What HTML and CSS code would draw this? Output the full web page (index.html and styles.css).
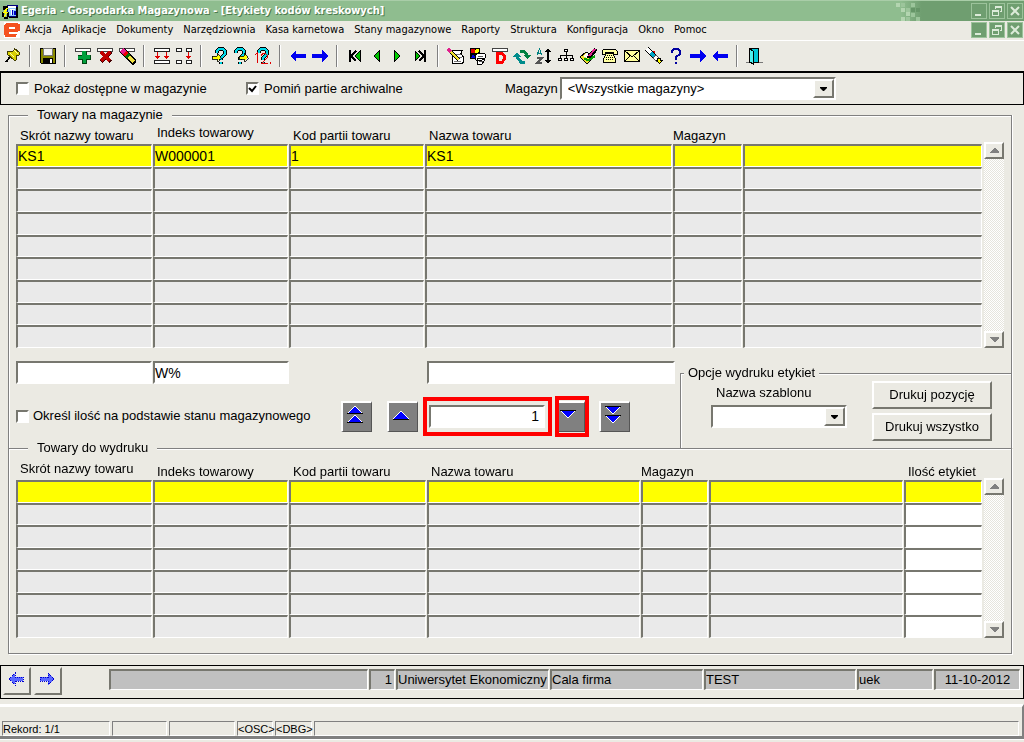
FILE: index.html
```
<!DOCTYPE html>
<html lang="pl">
<head>
<meta charset="utf-8">
<title>Egeria - Gospodarka Magazynowa</title>
<link rel="stylesheet" href="styles.css">
</head>
<body>
<header class="titlebar">
  <svg class="app-icon" viewBox="0 0 17 17" aria-hidden="true"><path fill="#000080" d="M5 2h10l1 1v11H5z"/><path fill="#8cc8ff" d="M6 4h8v9H6z"/><path fill="#fff" d="M5 3h9v2H5zM8 6h5v1h-2v5H9V7H8z"/><path fill="#0000c0" d="M10 7h1v5h-1zM12 8h2v4h-2z"/><path fill="#000" d="M1 3h5v4H1zM0 9h2v5H0zM5 9h2v5H5zM2 14h4v2H2zM14 4h2v11h-9v-1h7z"/><path fill="#ff0" d="M4 5h2L4 9h2l-4 6 1-5H1z"/></svg>
  <h1 class="title">Egeria - Gospodarka Magazynowa - [Etykiety kodów kreskowych]</h1>
  <svg class="mosaic" viewBox="0 0 28 21" aria-hidden="true"><path fill="#b3d5b0" d="M2 2h4v4H2zM7 7h4v4H7zM7 16h4v4H7zM12 11h4v4h-4z"/><path fill="#9cc59b" d="M7 2h4v4H7zM12 7h4v4h-4zM12 16h4v4h-4zM17 2h4v4h-4zM17 12h4v4h-4zM22 16h4v4h-4z"/><path fill="#659567" d="M17 7h4v4h-4zM22 7h4v4h-4z"/></svg>
  <div class="win-buttons">
    <button class="win" aria-label="Minimalizuj"><svg viewBox="0 0 12 12"><path d="M2 9h6v2H2z"/></svg></button>
    <button class="win" aria-label="Przywróć"><svg viewBox="0 0 12 12"><path d="M4 1h7v6H9V6h1V3H5v1H4zM1 5h7v6H1zM2 7v3h5V7z" fill-rule="evenodd"/></svg></button>
    <button class="win" aria-label="Zamknij"><svg viewBox="0 0 12 12"><path class="cross" d="M2 2l8 8M10 2l-8 8"/></svg></button>
  </div>
</header>

<nav class="menubar" aria-label="Menu">
  <svg class="e-icon" viewBox="0 0 16 16" aria-hidden="true"><path fill="#fff" d="M0 0h16v16H0z"/><path fill="#f4511e" fill-rule="evenodd" d="M3 1h9q4 0 4 3v3q0 3-4 3H5v2h8l-1 3H3q-3 0-3-4V6q0-5 3-5zM5 5v2h6V5z"/></svg>
  <button class="menu">Akcja</button><button class="menu">Aplikacje</button><button class="menu">Dokumenty</button><button class="menu">Narzędziownia</button><button class="menu">Kasa karnetowa</button><button class="menu">Stany magazynowe</button><button class="menu">Raporty</button><button class="menu">Struktura</button><button class="menu">Konfiguracja</button><button class="menu">Okno</button><button class="menu">Pomoc</button>
  <div class="win-buttons">
    <button class="win" aria-label="Minimalizuj okno"><svg viewBox="0 0 12 12"><path d="M2 9h6v2H2z"/></svg></button>
    <button class="win" aria-label="Przywróć okno"><svg viewBox="0 0 12 12"><path d="M4 1h7v6H9V6h1V3H5v1H4zM1 5h7v6H1zM2 7v3h5V7z" fill-rule="evenodd"/></svg></button>
    <button class="win" aria-label="Zamknij okno"><svg viewBox="0 0 12 12"><path class="cross" d="M2 2l8 8M10 2l-8 8"/></svg></button>
  </div>
</nav>

<div class="toolbar" role="toolbar" aria-label="Narzędzia">
  <button class="tool" aria-label="Przypnij"><svg viewBox="0 0 18 18"><path stroke="#000" stroke-width="2" d="M6 10l-4 5"/><path fill="#d8d000" stroke="#403c00" d="M10 1l6 5-1 2h-2l-1 5h-2L3 7V5l6-1 1-1z"/><path stroke="#ffffa0" d="M10 3l4 4M6 6l4 4"/></svg></button>
  <span class="sep"></span>
  <button class="tool" aria-label="Zapisz"><svg viewBox="0 0 18 18"><path fill="#8a8a00" stroke="#000" d="M1.500 1.500h15v15h-14l-1-1z"/><path fill="#f4f4f4" stroke="#777" d="M4.500 1.500h9v7h-9z"/><path fill="#000" d="M4 11h10v6H4z"/><path fill="#fff" d="M11 12h2v4h-2z"/></svg></button>
  <span class="sep"></span>
  <button class="tool" aria-label="Dodaj"><svg viewBox="0 0 18 18"><path fill="#fff" stroke="#444" d="M1.500 1.500h15v3h-15z"/><path fill="#041" d="M8 4h5v4h4v5h-4v4H8v-4H4V8h4z"/><path fill="#00a03c" d="M8 4h4v4h4v4h-4v4H9v-4H4V9h4z"/></svg></button>
  <button class="tool" aria-label="Usuń"><svg viewBox="0 0 18 18"><path fill="#fff" stroke="#444" d="M1.500 1.500h15v3h-15z"/><path stroke="#400" stroke-width="4" d="M5 5l10 10M15 5L5 15"/><path stroke="#c00000" stroke-width="3" d="M5 5l9 9M14 5l-9 9"/></svg></button>
  <button class="tool" aria-label="Wyczyść"><svg viewBox="0 0 18 18"><path fill="#fff" stroke="#444" d="M1.500 1.500h15v3h-15z"/><path stroke="#000" stroke-width="6" d="M4 3l13 13"/><path stroke="#e0208c" stroke-width="5" d="M4 3l4 4"/><path stroke="#e00" stroke-width="5" d="M7 6l2 2"/><path stroke="#007000" stroke-width="5" d="M9 8l2 2"/><path stroke="#f0e040" stroke-width="4" d="M11 10l5 5"/></svg></button>
  <span class="sep"></span>
  <button class="tool" aria-label="Wstaw wiersz"><svg viewBox="0 0 18 18"><path fill="#fff" stroke="#222" d="M1.500 1.500h15v3h-15zM1.500 13.500h15v3h-15z"/><path fill="#e00000" d="M4 5h1v4h2l-2.500 3L2 9h2zM13 5h1v4h2l-2.500 3L11 9h2z"/></svg></button>
  <button class="tool" aria-label="Powiel wiersz"><svg viewBox="0 0 18 18"><path fill="#fff" stroke="#222" d="M1.500 1.500h5v3h-5zM1.500 13.500h5v3h-5zM11.500 1.500h5v3h-5zM11.500 13.500h5v3h-5z"/><path fill="#e00000" d="M13 5h1v4h2l-2.500 3L11 9h2z"/></svg></button>
  <span class="sep"></span>
  <button class="tool" aria-label="Wprowadź zapytanie"><svg viewBox="0 0 18 18"><path class="q-line" d="M7 6V4l2-2h4l2 2v3l-4 4v2M11 15v2"/><path class="q" d="M7 6V4l2-2h4l2 2v3l-4 4v2M11 15v2"/><path fill="#ff0" stroke="#000" stroke-width=".8" d="M2 9h5V6l4 4.500L7 15v-3H2z"/></svg></button>
  <button class="tool" aria-label="Wykonaj zapytanie"><svg viewBox="0 0 18 18"><path class="q-line" d="M4 6V4l2-2h4l2 2v3l-4 4v2M8 15v2"/><path class="q" d="M4 6V4l2-2h4l2 2v3l-4 4v2M8 15v2"/><path fill="#ff0" stroke="#000" stroke-width=".8" d="M7 9h5V6l4 4.500L12 15v-3H7z"/></svg></button>
  <button class="tool" aria-label="Policz rekordy"><svg viewBox="0 0 18 18"><path class="q-line" d="M5 6V4l2-2h4l2 2v3l-4 4v2M9 15v2"/><path class="q" d="M5 6V4l2-2h4l2 2v3l-4 4v2M9 15v2"/><path fill="none" stroke="#e00000" d="M1 8l2-2v10M7 9l2-3h2l2 2v3l-5 5h6M16 15v2"/></svg></button>
  <span class="sep"></span>
  <button class="tool" aria-label="Poprzedni blok"><svg viewBox="0 0 18 18"><path fill="#0000f0" d="M1 9l6-6v4h10v4H7v4z"/></svg></button>
  <button class="tool" aria-label="Następny blok"><svg viewBox="0 0 18 18"><path fill="#0000f0" d="M17 9l-6-6v4H1v4h10v4z"/></svg></button>
  <span class="sep"></span>
  <button class="tool" aria-label="Pierwszy rekord"><svg viewBox="0 0 18 18"><path fill="none" stroke="#000" stroke-width="2" d="M4 3v12M10 4L5 9l5 5"/><path fill="#00c000" stroke="#000" d="M14 4v10L9 9z"/></svg></button>
  <button class="tool" aria-label="Poprzedni rekord"><svg viewBox="0 0 18 18"><path fill="#00c000" stroke="#000" d="M11.500 3.500v11L6 9z"/></svg></button>
  <button class="tool" aria-label="Następny rekord"><svg viewBox="0 0 18 18"><path fill="#00d000" stroke="#000" d="M4.500 3.500v11L10 9z"/></svg></button>
  <button class="tool" aria-label="Ostatni rekord"><svg viewBox="0 0 18 18"><path fill="#00c000" stroke="#000" d="M3 4v10l5-5z"/><path fill="none" stroke="#000" stroke-width="2" d="M7 4l5 5-5 5M13 3v12"/></svg></button>
  <span class="sep"></span>
  <button class="tool" aria-label="Edytuj"><svg viewBox="0 0 18 18"><path fill="#fff" stroke="#000" d="M5 3.500h10l-1 3 2 3v6l-1 1H6l-1-3z"/><path stroke="#777" d="M9 7h5M11 10h4M7 14h7"/><path stroke="#000" stroke-width="4" d="M2 3l10 10"/><path stroke="#f0e030" stroke-width="2" d="M4 5l8 8"/><path stroke="#e0208c" stroke-width="3" d="M1 2l3 3"/></svg></button>
  <button class="tool" aria-label="Lista wartości"><svg viewBox="0 0 18 18"><path fill="#000" d="M1 1h10v11H1z"/><path fill="#e00000" d="M2 2h4v4H2z"/><path fill="#0000e0" d="M2 11l2-4 3 4z"/><circle cx="8" cy="4" r="2" fill="#ff0"/><path fill="#fff" stroke="#000" d="M8 6h5l3 1v4l-3 2H7l-1-3zM8 11h6l2 2-3 4H8z"/><path stroke="#555" d="M9 9h5M10 14h4"/></svg></button>
  <button class="tool" aria-label="Dokument"><svg viewBox="0 0 18 18"><path fill="#fff" stroke="#444" d="M1.500 1.500h15v3h-15z"/><path fill="none" stroke="#f00" stroke-width="3" d="M5 6.500h6l2 2v4l-2 3H5M6 5v11"/></svg></button>
  <button class="tool" aria-label="Odśwież"><svg viewBox="0 0 18 18"><path fill="none" stroke="#008040" stroke-width="3" d="M7 4h4l3 4"/><path fill="#008040" d="M10 8h8l-4 4z"/><path fill="none" stroke="#008c8c" stroke-width="3" d="M12 15H8l-4-5"/><path fill="#008c8c" d="M0 10h8L4 5z"/></svg></button>
  <button class="tool" aria-label="Sortuj"><svg viewBox="0 0 18 18"><path fill="none" stroke="#008080" d="M2 8l2.500-6L7 8M3 6h3"/><path fill="none" stroke="#555" stroke-width="1.500" d="M2 11h5l-5 5h5"/><path fill="#000" d="M13 1l3 4h-2v8h2l-3 4-3-4h2V5h-2z"/></svg></button>
  <button class="tool" aria-label="Struktura drzewa"><svg viewBox="0 0 18 18"><path fill="#fff" stroke="#000" d="M7.500 2.500h3v2h-3zM1.500 11.500h3v2h-3zM7.500 11.500h3v2h-3zM13.500 11.500h3v2h-3z"/><path fill="none" stroke="#000" d="M9.500 5v6M3.500 11V8.500h12V11"/></svg></button>
  <button class="tool" aria-label="Podpis"><svg viewBox="0 0 18 18"><path fill="#f0e030" stroke="#000" d="M1 10l6-5 8 5-7 7z"/><path fill="#fff" d="M4 9l4-3 4 3-4 2z"/><path stroke="#000" stroke-width="4" d="M17 2l-8 9"/><path stroke="#e0208c" stroke-width="2" d="M16 2l-6 7"/><path stroke="#00a000" stroke-width="2" d="M5 12l5 1 6-4"/></svg></button>
  <button class="tool" aria-label="Telefon"><svg viewBox="0 0 18 18"><path fill="#ffffa0" stroke="#000" d="M2.500 2.500h12l2 2v3h-4v-2h-8v2h-3v-4zM5.500 6.500h6l3 5v4h-12v-4z"/><path stroke="#000" stroke-dasharray="1" d="M6 8.500h5M5 10.500h7M5 12.500h7"/></svg></button>
  <button class="tool" aria-label="Poczta"><svg viewBox="0 0 18 18"><path fill="#ffff9c" stroke="#000" d="M1.500 3.500h15v11h-15z"/><path fill="none" stroke="#000" d="M2 4l7 6 7-6M2 14l5-5M16 14l-5-5"/></svg></button>
  <button class="tool" aria-label="Latarka"><svg viewBox="0 0 18 18"><path stroke="#000" stroke-width="5" d="M2 2l8 8"/><path stroke="#fff" stroke-width="3" d="M2 2l4 4"/><path stroke="#00a8c8" stroke-width="3" d="M6 6l4 4"/><path fill="#d00" d="M7 4h3v3z"/><path fill="#fff" stroke="#555" d="M8 11l3-3 4 4-3 3z"/><path fill="#000" d="M12 11h4v2h2l-4 4-4-4h2z"/><path fill="#ff0" d="M13 12h2v2h1l-2 2-2-2h1z"/></svg></button>
  <button class="tool" aria-label="Pomoc"><svg viewBox="0 0 18 18"><path fill="none" stroke="#0000a0" stroke-width="2" d="M5 6V4l2-2h4l2 2v3l-4 3v3M9 15v2"/></svg></button>
  <button class="tool" aria-label="Dalej"><svg viewBox="0 0 18 18"><path fill="#0000f0" d="M17 9l-6-6v4H1v4h10v4z"/></svg></button>
  <button class="tool" aria-label="Wstecz"><svg viewBox="0 0 18 18"><path fill="#0000f0" d="M1 9l6-6v4h10v4H7v4z"/></svg></button>
  <span class="sep"></span>
  <button class="tool" aria-label="Wyjście"><svg viewBox="0 0 18 18"><path stroke="#777" d="M0 15.500h17"/><path fill="#00c8d8" stroke="#000" d="M3.500 1.500h9v14h-9z"/><path fill="#50f0f0" stroke="#000" d="M3.500 1.500l4 3v13l-4-3z"/></svg></button>
</div>

<div class="filterbar">
  <label class="check available"><input type="checkbox">Pokaż dostępne w magazynie</label>
  <label class="check archive"><input type="checkbox" checked>Pomiń partie archiwalne</label>
  <label class="warehouse-label" for="warehouse">Magazyn</label>
  <span class="combo warehouse"><select id="warehouse"><option>&lt;Wszystkie magazyny&gt;</option></select></span>
</div>

<main class="content">
  <fieldset class="group stock">
    <legend>Towary na magazynie</legend>
    <div class="grid-wrap">
      <table class="grid stock-grid">
        <colgroup><col class="c-short"><col class="c-std"><col class="c-std"><col><col class="c-code"><col class="c-desc"></colgroup>
        <thead><tr><th>Skrót nazwy towaru</th><th class="raised">Indeks towarowy</th><th>Kod partii towaru</th><th>Nazwa towaru</th><th class="flush" colspan="2">Magazyn</th></tr></thead>
        <tbody>
          <tr class="current"><td>KS1</td><td>W000001</td><td>1</td><td>KS1</td><td></td><td></td></tr>
          <tr><td></td><td></td><td></td><td></td><td></td><td></td></tr>
          <tr><td></td><td></td><td></td><td></td><td></td><td></td></tr>
          <tr><td></td><td></td><td></td><td></td><td></td><td></td></tr>
          <tr><td></td><td></td><td></td><td></td><td></td><td></td></tr>
          <tr><td></td><td></td><td></td><td></td><td></td><td></td></tr>
          <tr><td></td><td></td><td></td><td></td><td></td><td></td></tr>
          <tr><td></td><td></td><td></td><td></td><td></td><td></td></tr>
          <tr><td></td><td></td><td></td><td></td><td></td><td></td></tr>
        </tbody>
      </table>
      <div class="scroll"><button aria-label="W górę"><svg viewBox="0 0 9 5"><path d="M4 0h1l4 4v1H0V4z"/></svg></button><button aria-label="W dół"><svg viewBox="0 0 9 5"><path d="M0 0h9v1L5 5H4L0 1z"/></svg></button></div>
    </div>

    <div class="lower">
      <div class="lower-left">
        <div class="search">
          <input class="field" type="text" aria-label="Szukaj skrótu nazwy">
          <input class="field" type="text" aria-label="Szukaj indeksu" value="W%" autofocus>
          <input class="field name" type="text" aria-label="Szukaj nazwy">
        </div>
        <div class="quantity">
          <label class="check by-stock"><input type="checkbox">Określ ilość na podstawie stanu magazynowego</label>
          <button class="move" aria-label="Przenieś wszystko w górę"><svg viewBox="0 0 18 20"><path d="M9 2l8 8H1zM9 11l8 8H1z"/><path class="edge" d="M1 10l8-8 8 8M1 19l8-8 8 8"/><path class="base" d="M1 9.500h16M1 18.500h16"/></svg></button>
          <button class="move" aria-label="Przenieś w górę"><svg viewBox="0 0 18 20"><path d="M9 7l8 8H1z"/><path class="edge" d="M1 15l8-8 8 8"/><path class="base" d="M1 15.500h16"/></svg></button>
          <div class="marked"><input class="field number" type="text" aria-label="Ilość etykiet" value="1"></div>
          <div class="marked tight"><button class="move" aria-label="Przenieś w dół"><svg viewBox="0 0 18 20"><path d="M1 6h16l-8 8z"/><path class="edge" d="M1 6l8 8 8-8"/><path class="base" d="M1 6.500h16"/></svg></button></div>
          <button class="move" aria-label="Przenieś wszystko w dół"><svg viewBox="0 0 18 20"><path d="M1 2h16l-8 8zM1 11h16l-8 8z"/><path class="edge" d="M1 2l8 8 8-8M1 11l8 8 8-8"/><path class="base" d="M1 2.500h16M1 11.500h16"/></svg></button>
        </div>
      </div>
      <fieldset class="group options">
        <legend>Opcje wydruku etykiet</legend>
        <div class="template">
          <label for="template">Nazwa szablonu</label>
          <span class="combo"><select id="template"><option></option></select></span>
        </div>
        <div class="print">
          <button class="push">Drukuj pozycję</button>
          <button class="push">Drukuj wszystko</button>
        </div>
      </fieldset>
    </div>
  </fieldset>

  <fieldset class="group output">
    <legend>Towary do wydruku</legend>
    <div class="grid-wrap">
      <table class="grid output-grid">
        <colgroup><col class="c-short"><col class="c-std"><col class="c-mid"><col><col class="c-code2"><col class="c-desc2"><col class="c-count"></colgroup>
        <thead><tr><th class="raised">Skrót nazwy towaru</th><th>Indeks towarowy</th><th>Kod partii towaru</th><th>Nazwa towaru</th><th class="flush" colspan="2">Magazyn</th><th>Ilość etykiet</th></tr></thead>
        <tbody>
          <tr class="current"><td></td><td></td><td></td><td></td><td></td><td></td><td></td></tr>
          <tr><td></td><td></td><td></td><td></td><td></td><td></td><td class="editable"></td></tr>
          <tr><td></td><td></td><td></td><td></td><td></td><td></td><td class="editable"></td></tr>
          <tr><td></td><td></td><td></td><td></td><td></td><td></td><td class="editable"></td></tr>
          <tr><td></td><td></td><td></td><td></td><td></td><td></td><td class="editable"></td></tr>
          <tr><td></td><td></td><td></td><td></td><td></td><td></td><td class="editable"></td></tr>
          <tr><td></td><td></td><td></td><td></td><td></td><td></td><td class="editable"></td></tr>
        </tbody>
      </table>
      <div class="scroll"><button aria-label="W górę"><svg viewBox="0 0 9 5"><path d="M4 0h1l4 4v1H0V4z"/></svg></button><button aria-label="W dół"><svg viewBox="0 0 9 5"><path d="M0 0h9v1L5 5H4L0 1z"/></svg></button></div>
    </div>
  </fieldset>
</main>

<div class="context">
  <button class="hist" aria-label="Poprzednie okno"><svg viewBox="0 0 16 14"><path d="M1 7l6-6v4h8v4H7v4z"/></svg></button>
  <button class="hist" aria-label="Następne okno"><svg viewBox="0 0 16 14"><path d="M15 7L9 1v4H1v4h8v4z"/></svg></button>
  <div class="context-fields">
    <output></output><output class="right">1</output><output>Uniwersytet Ekonomiczny</output><output>Cala firma</output><output>TEST</output><output>uek</output><output class="center">11-10-2012</output>
  </div>
</div>

<footer class="status">
  <span>Rekord: 1/1</span><span></span><span></span><span>&lt;OSC&gt;</span><span>&lt;DBG&gt;</span><span></span>
</footer>
<div class="taskbar-edge"></div>
</body>
</html>
```
FILE: styles.css
```
:root {
  --face: #ebeae3;
  --cell: #eaeaea;
  --dark: #77776f;
  --line: #808080;
  --green: #8fbd8f;
  --green-dark: #6f9e70;
}
* { box-sizing: border-box; }
body {
  margin: 0;
  min-height: 100vh;
  display: flex;
  flex-direction: column;
  background: var(--face);
  color: #000;
  font: 13px/16px "Liberation Sans", Arial, sans-serif;
}
button, input, select { font: inherit; color: inherit; margin: 0; padding: 0; border: 0; border-radius: 0; background: none; }
svg { display: block; shape-rendering: crispEdges; }

/* Window chrome */
.titlebar {
  height: 21px;
  display: flex;
  align-items: center;
  padding: 0 1px 0 2px;
  background: linear-gradient(to right, var(--green) 88%, var(--green-dark) 90%);
  border-top: 1px solid #a9cda8;
  overflow: hidden;
}
.app-icon { width: 17px; height: 17px; }
.title {
  flex: 1;
  margin: 0 0 0 2px;
  color: #fff;
  font: bold 11px/16px "DejaVu Sans Condensed", "DejaVu Sans", sans-serif;
  text-shadow: 1px 1px 0 #4c7a4e;
  white-space: nowrap;
}
.mosaic { width: 28px; height: 21px; margin-right: 49px; }
.win-buttons { display: flex; gap: 2px; }
.win {
  width: 16px;
  height: 16px;
  display: grid;
  place-items: center;
  background: var(--green-dark);
  border: 1px solid #9cc39b;
}
.win svg { width: 12px; height: 12px; fill: #dcebd9; }
.cross { stroke: #dcebd9; stroke-width: 2; shape-rendering: auto; }
.menubar {
  height: 20px;
  display: flex;
  align-items: center;
  padding: 0 1px 1px 4px;
  border-bottom: 1px solid #fff;
  font: 11px/16px "DejaVu Sans Condensed", "DejaVu Sans", sans-serif;
}
.e-icon { width: 16px; height: 16px; }
.menu { padding: 0 5px; white-space: nowrap; }
.menubar .win-buttons { margin-left: auto; }

/* Toolbar */
.toolbar { height: 30px; display: flex; align-items: center; padding-left: 2px; }
.tool { width: 22px; height: 22px; display: grid; place-items: center; flex: none; }
.tool svg { width: 18px; height: 18px; fill: none; }
.q-line { stroke: #000; stroke-width: 4; }
.q { stroke: #00d8e8; stroke-width: 2; }
.sep { flex: none; width: 2px; height: 22px; margin: 0 6px 0 5px; background: linear-gradient(to right, var(--line) 50%, #fff 50%); }

/* Shared controls */
.check { display: flex; align-items: center; white-space: nowrap; }
.check input {
  appearance: none;
  flex: none;
  width: 13px;
  height: 13px;
  margin-right: 5px;
  background: #fff;
  border: 2px solid;
  border-color: var(--dark) #fff #fff var(--dark);
}
.check input:checked {
  background: #fff url("data:image/svg+xml,%3Csvg xmlns='http://www.w3.org/2000/svg' viewBox='0 0 9 9'%3E%3Cpath d='M1 4l3 3 4-5' fill='none' stroke='%23000' stroke-width='2'/%3E%3C/svg%3E") center / 9px 9px no-repeat;
}
.combo {
  display: flex;
  position: relative;
  height: 23px;
  background: #fff;
  border: 2px solid;
  border-color: var(--dark) #fff #fff var(--dark);
}
.combo select { appearance: none; flex: 1; min-width: 0; padding-left: 6px; outline: 0; }
.combo::after {
  content: "";
  position: absolute;
  inset: 0 0 0 auto;
  width: 17px;
  pointer-events: none;
  background: var(--face) url("data:image/svg+xml,%3Csvg xmlns='http://www.w3.org/2000/svg' viewBox='0 0 7 4'%3E%3Cpath d='M0 0h7v1L4 4H3L0 1z'/%3E%3C/svg%3E") center / 7px 4px no-repeat;
  border: 2px solid;
  border-color: #fff var(--dark) var(--dark) #fff;
}
.field {
  height: 23px;
  min-width: 0;
  background: #fff;
  border: 2px solid;
  border-color: var(--dark) #fff #fff var(--dark);
  font-size: 14px;
  outline: 0;
}

/* Filter strip */
.filterbar {
  height: 34px;
  display: flex;
  align-items: center;
  border: 1px solid #000;
  border-top-width: 2px;
  padding-left: 15px;
}
.available { width: 230px; }
.archive { width: 259px; }
.warehouse-label { margin-right: 2px; }
.warehouse { width: 276px; }

/* Groups */
.content { padding: 2px 12px 11px 8px; }
.group {
  min-width: 0;
  margin: 0;
  padding: 0;
  border: 1px solid var(--line);
  box-shadow: 1px 1px 0 #fff, inset 1px 1px 0 #fff;
}
legend { height: 16px; margin-left: 19px; padding: 0 9px; background: var(--face); }
.stock { border-bottom: 0; box-shadow: 1px 0 0 #fff, inset 1px 1px 0 #fff; }
.output { margin-top: -8px; padding-bottom: 15px; }
.grid-wrap { display: flex; gap: 1px; padding: 0 7px 0 6px; }
.grid { flex: 1; table-layout: fixed; border-collapse: separate; border-spacing: 1px 0; }
.stock-grid { height: 225px; }
.output-grid { height: 182px; }
.grid th { padding: 0 0 0 4px; font-weight: normal; text-align: left; vertical-align: bottom; white-space: nowrap; }
.grid .raised { padding-bottom: 3px; }
.grid .flush { padding-left: 0; }
.stock-grid th { height: 21px; }
.output-grid th { height: 24px; }
.grid td {
  padding: 0;
  height: 22px;
  background: var(--cell);
  border: solid;
  border-width: 2px 1px 1px 2px;
  border-color: var(--dark) #fff #fff var(--dark);
  font-size: 14px;
  line-height: 18px;
}
.grid .current td { background: #ff0; }
.grid .editable { background: #fff; }
.c-short { width: 136px; }
.c-std { width: 135px; }
.c-mid { width: 137px; }
.c-code { width: 69px; }
.c-desc { width: 239px; }
.c-code2 { width: 67px; }
.c-desc2 { width: 194px; }
.c-count { width: 78px; }
.scroll {
  flex: none;
  width: 20px;
  margin-top: 19px;
  display: flex;
  flex-direction: column;
  justify-content: space-between;
  background: repeating-conic-gradient(#fff 0 25%, #e6e5dd 0 50%) 0 0 / 2px 2px;
}
.output .scroll { margin-top: 22px; }
.scroll button {
  height: 17px;
  display: grid;
  place-items: center;
  background: var(--face);
  border: 2px solid;
  border-color: #fff var(--dark) var(--dark) #fff;
}
.scroll svg { width: 9px; height: 5px; fill: var(--line); }

/* Search, quantity and print options */
.lower { display: grid; grid-template-columns: 1fr 331px; height: 100px; }
.lower-left { padding: 13px 5px 0 7px; }
.search { display: grid; grid-template-columns: 136px 136px 1fr; gap: 1px; }
.search .name { margin-left: 137px; }
.quantity { display: flex; align-items: center; height: 64px; }
.by-stock { width: 325px; }
.by-stock input { margin-right: 4px; }
.move {
  flex: none;
  width: 31px;
  height: 31px;
  margin-right: 15px;
  padding: 0 0 5px 3px;
  background: var(--line);
  border: solid;
  border-width: 2px 1px 1px 2px;
  border-color: #fff #555 #555 #fff;
}
.move svg { width: 18px; height: 20px; fill: #00f; }
.move .edge { fill: none; stroke: #fff; }
.move .base { fill: none; stroke: #000; }
.marked { flex: none; width: 129px; padding: 4px 2px; border: 4px solid #f00; margin: 0 3px 0 -10px; }
.marked .number { width: 116px; text-align: right; padding-right: 4px; }
.tight { width: 34px; margin: 0 10px 0 0; padding: 1px 0; }
.tight .move { width: 26px; margin: 0; padding-left: 0; border-left: 0; }
.options {
  display: flex;
  justify-content: space-between;
  margin-top: 17px;
  border-width: 1px 0 0 1px;
  box-shadow: inset 1px 1px 0 #fff;
}
.options legend { margin-left: 3px; padding: 0 4px; }
.template { padding: 4px 0 0 30px; }
.template label { display: block; margin: 0 0 4px 5px; }
.template .combo { width: 136px; }
.print { display: grid; gap: 4px; align-content: start; padding: 0 19px 0 0; }
.push {
  width: 120px;
  height: 28px;
  background: var(--face);
  border: 2px solid;
  border-color: #fff var(--dark) var(--dark) #fff;
}

/* Context strip */
.context {
  height: 34px;
  display: flex;
  align-items: flex-start;
  padding: 1px 3px 0 2px;
  border: 1px solid #000;
}
.hist {
  width: 28px;
  height: 28px;
  margin-right: 3px;
  padding: 0 2px 4px 0;
  display: grid;
  place-items: center;
  border: 2px solid;
  border-color: transparent var(--dark) var(--dark) transparent;
}
.hist svg { width: 16px; height: 14px; fill: #5a68ff; stroke: #0000d0; stroke-dasharray: 1; }
.context-fields {
  flex: 1;
  display: grid;
  grid-template-columns: 259px 26px 153px 153px 152px 76px 1fr;
  gap: 1px;
  margin: 2px 0 0 44px;
}
.context-fields output {
  height: 21px;
  overflow: hidden;
  white-space: nowrap;
  background: #c0c0c0;
  border: solid;
  border-width: 2px 1px 1px 2px;
  border-color: var(--dark) #fff #fff var(--dark);
  line-height: 17px;
}
.context-fields .right { text-align: right; padding-right: 2px; }
.context-fields .center { text-align: center; }

/* Status line */
.status {
  display: grid;
  grid-template-columns: 108px 55px 66px 36px 37px 1fr;
  gap: 2px;
  height: 35px;
  margin-top: 5px;
  padding: 14px 3px 0 2px;
  border-top: 3px solid #fff;
  border-right: 2px solid var(--line);
  border-bottom: 3px solid var(--line);
  font-size: 11px;
}
.status span {
  height: 15px;
  line-height: 14px;
  white-space: nowrap;
  border: 1px solid;
  border-color: var(--line) #fff #fff var(--line);
}
.taskbar-edge { height: 3px; border-top: 1px solid #fff; }
```
